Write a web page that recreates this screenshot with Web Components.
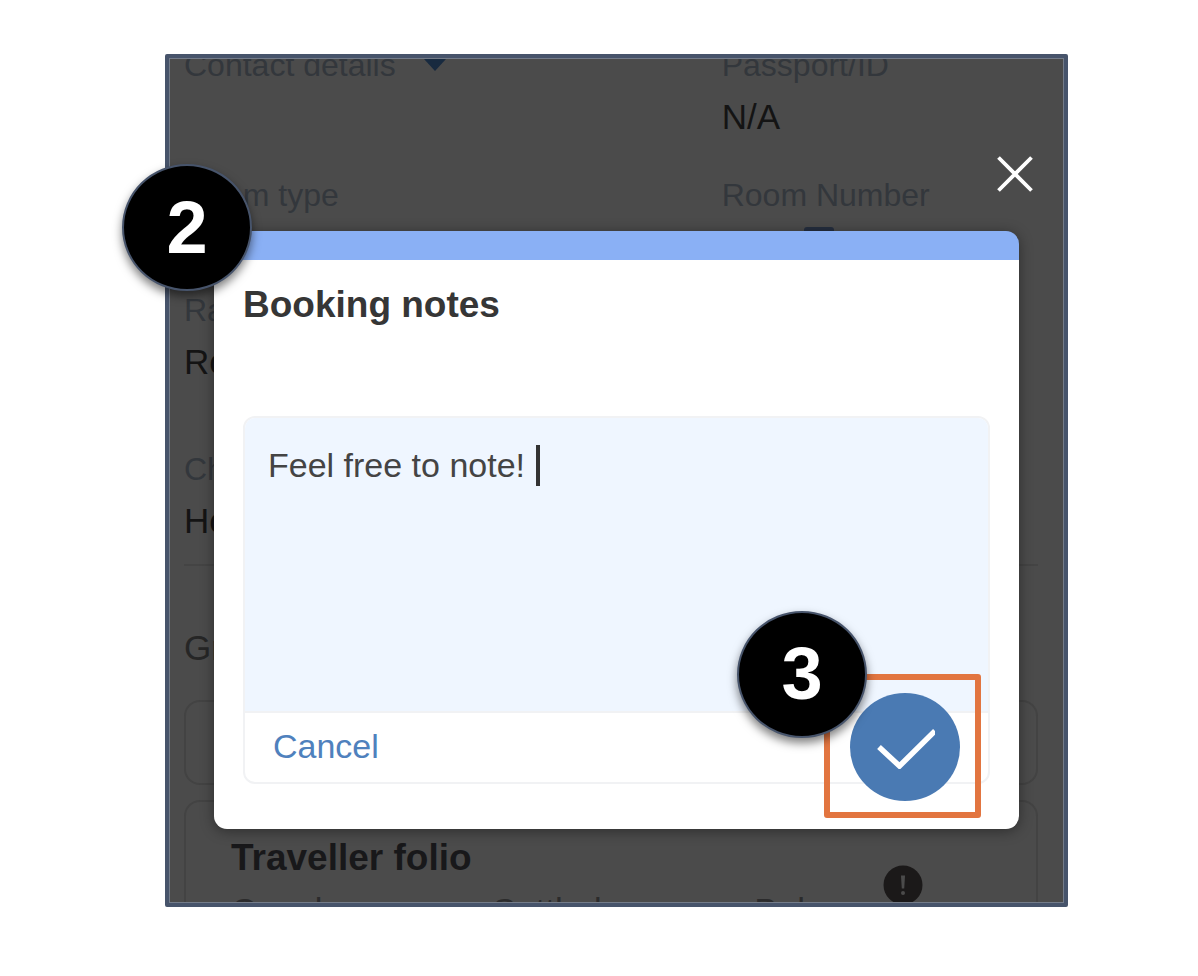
<!DOCTYPE html>
<html lang="en">
<head>
<meta charset="utf-8">
<title>Booking notes</title>
<style>
  body {
    margin: 0;
    padding: 54px 130px 0 165px;
    background: #fff;
    font-family: "Liberation Sans", Arial, sans-serif;
  }
</style>
</head>
<body>
<shot-frame>
  <booking-page></booking-page>
  <notes-dialog slot="overlay" heading="Booking notes" note="Feel free to note! "></notes-dialog>
  <step-badge slot="badge">2</step-badge>
</shot-frame>

<script>
  // Bordered window that crops the page and carries overlays
  class ShotFrame extends HTMLElement {
    constructor() {
      super();
      this.attachShadow({ mode: 'open' });
      this.shadowRoot.innerHTML = `
        <style>
          :host {
            display: block;
            position: relative;
          }
          .window {
            box-sizing: border-box;
            height: calc(100vh - 123px);
            min-height: 800px;
            overflow: hidden;
            border: 4px solid #47546b;
            border-radius: 2px;
            background: #4b4b4b;
          }
          .inner {
            box-sizing: border-box;
            position: relative;
            height: 100%;
            overflow: hidden;
            border: 1px solid #747c89;
          }
          ::slotted([slot="overlay"]) {
            position: absolute;
            inset: 0;
          }
          ::slotted([slot="badge"]) {
            position: absolute;
            left: -43px;
            top: 110px;
          }
        </style>
        <div class="window"><div class="inner">
          <slot></slot>
          <slot name="overlay"></slot>
        </div></div>
        <slot name="badge"></slot>
      `;
    }
  }

  class StepBadge extends HTMLElement {
    constructor() {
      super();
      this.attachShadow({ mode: 'open' });
      this.shadowRoot.innerHTML = `
        <style>
          :host {
            box-sizing: border-box;
            display: flex;
            align-items: center;
            justify-content: center;
            width: 130px;
            height: 127px;
            border: 2px solid #47546b;
            border-radius: 50%;
            background: #000;
            box-shadow: 0 5px 10px rgba(0, 0, 0, 0.5);
            color: #fff;
            font-size: 74px;
            font-weight: bold;
            line-height: 82px;
          }
        </style>
        <slot></slot>
      `;
    }
  }

  class BookingField extends HTMLElement {
    constructor() {
      super();
      this.attachShadow({ mode: 'open' });
    }

    connectedCallback() {
      const label = this.getAttribute('label') || '';
      this.shadowRoot.innerHTML = `
        <style>
          :host {
            display: block;
            height: 92px;
            white-space: nowrap;
          }
          .label {
            display: flex;
            align-items: center;
            gap: 28px;
            color: #33373c;
            font-size: 32px;
            line-height: 40px;
          }
          .value {
            margin-top: 12px;
            color: #141414;
            font-size: 35px;
            line-height: 40px;
          }
        </style>
        <div class="label">${label}<slot name="icon"></slot></div>
        <div class="value"><slot></slot></div>
      `;
    }
  }

  class FolioCard extends HTMLElement {
    constructor() {
      super();
      this.attachShadow({ mode: 'open' });
      this.shadowRoot.innerHTML = `
        <style>
          :host {
            display: block;
            padding: 36px 20px 36px 45px;
            border: 2px solid #434343;
            border-radius: 16px;
          }
          h2 {
            margin: 0 0 13px;
            color: #18181a;
            font-size: 37px;
            line-height: 40px;
          }
          .totals {
            display: grid;
            grid-template-columns: repeat(3, minmax(0, 1fr));
            color: #2b2b2c;
            font-size: 35px;
            line-height: 40px;
          }
          .totals div {
            display: flex;
            gap: 2px;
          }
          svg {
            flex: none;
            margin-top: -26px;
          }
        </style>
        <h2>Traveller folio</h2>
        <div class="totals">
          <div>Owed</div>
          <div>Settled</div>
          <div>Balance
            <svg width="40" height="40" viewBox="0 0 40 40">
              <circle cx="20" cy="20" r="19.5" fill="#1b1919"/>
              <path d="M18 10.5h4l-.8 13h-2.400z" fill="#4b4b4b"/>
              <circle cx="20" cy="28" r="2" fill="#4b4b4b"/>
            </svg>
          </div>
        </div>
      `;
    }
  }

  class BookingPage extends HTMLElement {
    constructor() {
      super();
      this.attachShadow({ mode: 'open' });
      this.shadowRoot.innerHTML = `
        <style>
          :host {
            display: block;
            margin-top: -14px;
            padding: 0 25px 0 14px;
          }
          .row {
            display: grid;
            grid-template-columns: minmax(0, 1.7fr) minmax(0, 1fr);
            margin-bottom: 23px;
          }
          .row.contact {
            margin-bottom: 38px;
          }
          .row.rate {
            margin-bottom: 67px;
          }
          .door {
            display: block;
            margin: 2px 0 0 82px;
          }
          hr {
            margin: 0 0 62px;
            border: 0;
            border-top: 2px solid #444;
          }
          .group {
            color: #262626;
            font-size: 35px;
            line-height: 40px;
          }
          .box {
            box-sizing: border-box;
            height: 85px;
            margin: 32px 0 15px;
            border: 2px solid #434343;
            border-radius: 16px;
          }
        </style>
        <div class="row contact">
          <booking-field label="Contact details">
            <svg slot="icon" width="22" height="14" viewBox="0 0 22 14"><path d="M0 1h22L11 13z" fill="#182a3f"/></svg>
          </booking-field>
          <booking-field label="Passport/ID">N/A</booking-field>
        </div>
        <div class="row">
          <booking-field label="Room type"></booking-field>
          <booking-field label="Room Number">
            <svg class="door" width="30" height="30" viewBox="0 0 30 30"><rect width="30" height="30" rx="3" fill="#252e3f"/></svg>
          </booking-field>
        </div>
        <div class="row rate"><booking-field label="Rate">Room</booking-field></div>
        <div class="row"><booking-field label="Check">Hotel</booking-field></div>
        <hr>
        <div class="group">Group</div>
        <div class="box"></div>
        <folio-card></folio-card>
      `;
    }
  }

  class NotesDialog extends HTMLElement {
    constructor() {
      super();
      this.attachShadow({ mode: 'open' });
    }

    connectedCallback() {
      const heading = this.getAttribute('heading') || '';
      const note = this.getAttribute('note') || '';
      this.shadowRoot.innerHTML = `
        <style>
          :host {
            display: flex;
            flex-direction: column;
            padding: 91px 44px 0;
          }
          button {
            padding: 0;
            border: 0;
            background: none;
            font: inherit;
            cursor: pointer;
          }
          .close {
            align-self: flex-end;
            width: 48px;
            height: 48px;
            margin: 0 -20px 33px 0;
          }
          svg {
            display: block;
          }
          .dialog {
            padding: 0 29px 45px;
            border-top: 29px solid #8ab0f5;
            border-radius: 13px;
            background: #fff;
            box-shadow: 0 2px 14px rgba(0, 0, 0, 0.4);
          }
          h1 {
            margin: 0;
            padding: 25px 0 91px;
            color: #363636;
            font-size: 37px;
            line-height: 40px;
          }
          .editor {
            border: 2px solid #f1f2f4;
            border-radius: 12px;
          }
          .field {
            position: relative;
          }
          textarea {
            box-sizing: border-box;
            display: block;
            width: 100%;
            height: 295px;
            padding: 27px 23px;
            border: 0;
            border-bottom: 2px solid #f1f2f4;
            border-radius: 10px 10px 0 0;
            outline: 0;
            resize: none;
            background: #eff6ff;
            color: #444;
            font: 34px/40px "Liberation Sans", Arial, sans-serif;
          }
          .caret {
            position: absolute;
            left: 291px;
            top: 27px;
            width: 4px;
            height: 41px;
            background: #333;
          }
          .actions {
            display: flex;
            align-items: center;
            justify-content: space-between;
            height: 69px;
            padding: 0 28px;
          }
          .cancel {
            color: #4f81bd;
            font-size: 34px;
            line-height: 40px;
            margin-bottom: 4px;
          }
          .confirm-wrap {
            position: relative;
            margin-bottom: 2px;
          }
          .confirm {
            display: flex;
            align-items: center;
            justify-content: center;
            width: 110px;
            height: 108px;
            border-radius: 50%;
            background: #4a7ab3;
          }
          .marker {
            position: absolute;
            inset: -19px -21px -17px -26px;
            border: 6px solid #e27540;
            border-radius: 3px;
            pointer-events: none;
          }
          step-badge {
            position: absolute;
            left: -113px;
            top: -82px;
          }
        </style>
        <button class="close" type="button" aria-label="Close">
          <svg width="48" height="48" viewBox="0 0 48 48"><path d="M7.500 7.500l33 33M40.500 7.500l-33 33" stroke="#fff" stroke-width="3.800" fill="none"/></svg>
        </button>
        <section class="dialog" role="dialog" aria-labelledby="title">
          <h1 id="title">${heading}</h1>
          <div class="editor">
            <div class="field">
              <textarea aria-labelledby="title" spellcheck="false">${note}</textarea>
              <span class="caret"></span>
            </div>
            <div class="actions">
              <button class="cancel" type="button">Cancel</button>
              <div class="confirm-wrap">
                <button class="confirm" type="button" aria-label="Save note">
                  <svg width="60" height="44" viewBox="0 0 60 44"><path d="M4 22l20.500 19L60 6" stroke="#fff" stroke-width="5.500" fill="none"/></svg>
                </button>
                <div class="marker"></div>
                <step-badge>3</step-badge>
              </div>
            </div>
          </div>
        </section>
      `;
    }
  }

  customElements.define('shot-frame', ShotFrame);
  customElements.define('step-badge', StepBadge);
  customElements.define('booking-field', BookingField);
  customElements.define('folio-card', FolioCard);
  customElements.define('booking-page', BookingPage);
  customElements.define('notes-dialog', NotesDialog);
</script>
</body>
</html>
